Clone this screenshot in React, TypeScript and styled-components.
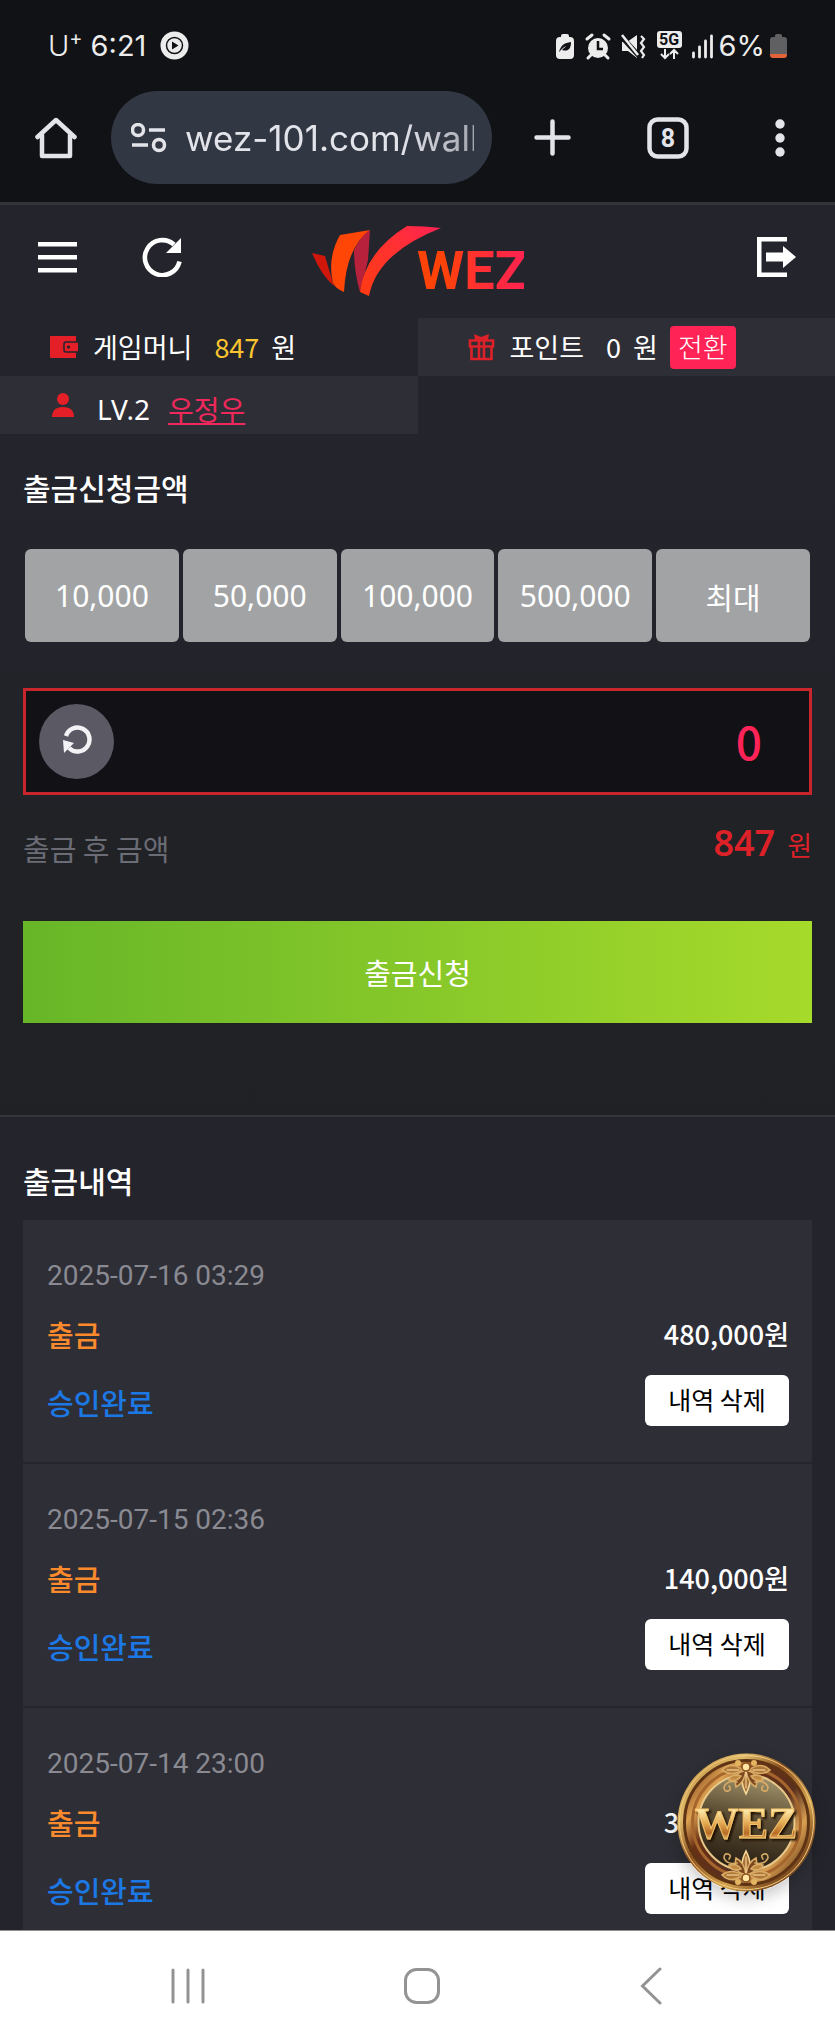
import React, { useState } from "react";
import styled, { createGlobalStyle } from "styled-components";

const kr = `"Noto Sans CJK KR", "Noto Sans", sans-serif`;
const latin = `"Noto Sans", "Noto Sans CJK KR", sans-serif`;

const GlobalStyle = createGlobalStyle`
  * { box-sizing: border-box; }
  body { margin: 0; background: #24242c; color: #fff; font-family: ${kr}; }
  button, input { font: inherit; color: inherit; margin: 0; padding: 0; border: 0; background: none; }
  button { cursor: pointer; }
  svg { display: block; flex: none; }
  h2, p, ul { margin: 0; padding: 0; }
`;

const Screen = styled.div`
  position: relative;
  display: flex;
  flex-direction: column;
  height: 100vh;
  overflow: hidden;
`;

/* Phone and browser bars */

const StatusBar = styled.div`
  display: flex;
  align-items: center;
  justify-content: space-between;
  height: 91px;
  flex: none;
  padding: 0 48px;
  background: #111216;
  color: #ececec;
  font-family: Inter, sans-serif;
  font-size: 29px;
`;

const StatusGroup = styled.div<{ $gap: number }>`
  display: flex;
  align-items: center;
  gap: ${(p) => p.$gap}px;
`;

const Carrier = styled.span`
  font-weight: 300;
  sup { font-size: 20px; line-height: 0; font-weight: 400; }
`;

const Clock = styled.span`
  margin-right: 6px;
`;

const BrowserBar = styled.div`
  display: flex;
  align-items: center;
  flex: none;
  height: 114px;
  padding-bottom: 18px;
  background: #111216;
  border-bottom: 3px solid #33343a;
`;

const BarButton = styled.button<{ $width: number }>`
  display: flex;
  align-items: center;
  justify-content: center;
  width: ${(p) => p.$width}px;
  height: 93px;
  flex: none;
`;

const AddressPill = styled.label`
  display: flex;
  align-items: center;
  gap: 18px;
  flex: 1;
  min-width: 0;
  height: 93px;
  padding: 0 18px 0 20px;
  border-radius: 47px;
  background: #323744;
`;

const AddressInput = styled.input`
  flex: 1;
  min-width: 0;
  color: #e3e3ea;
  font-family: Inter, sans-serif;
  font-size: 35px;
  outline: none;
  mask-image: linear-gradient(90deg, #000 75%, rgba(0, 0, 0, 0.65));
`;

const SystemNav = styled.nav`
  display: grid;
  grid-template-columns: 45fr 11fr 44fr;
  align-items: center;
  flex: none;
  height: 111px;
  background: #fff;
  border-top: 1px solid #8f8f92;
`;

const NavButton = styled.button`
  display: flex;
  justify-content: center;
`;

/* Site header */

const SiteHeader = styled.header`
  display: grid;
  grid-template-columns: 1fr auto 1fr;
  align-items: center;
  height: 113px;
  padding: 0 38px;
  flex: none;
  background: #24242c;
`;

const HeaderTools = styled.div`
  display: flex;
  gap: 64px;
`;

const ToolButton = styled.button`
  justify-self: end;
  margin-bottom: 10px;
`;

const InfoGrid = styled.div`
  display: grid;
  grid-template-columns: 1fr 1fr;
  flex: none;
  background: #24242c;
  font-size: 27px;
  line-height: 40px;
`;

const InfoCell = styled.div<{ $raised?: boolean }>`
  display: flex;
  align-items: center;
  height: 58px;
  padding-left: 50px;
  background: ${(p) => (p.$raised ? "#2e2e36" : "transparent")};
`;

const InfoLabel = styled.span`
  margin: 0 22px 0 15px;
`;

const Balance = styled.span<{ $gold?: boolean }>`
  margin-right: 12px;
  color: ${(p) => (p.$gold ? "#fbc52f" : "#fff")};
`;

const Level = styled.span`
  margin: 8px 18px 0 23px;
  font-family: ${latin};
  font-size: 28px;
`;

const UserLink = styled.a`
  margin-top: 8px;
  color: #f0285c;
  font-size: 28px;
  text-decoration: underline;
  text-decoration-thickness: 2px;
  text-underline-offset: 2px;
`;

const ConvertButton = styled.button`
  height: 43px;
  margin-left: 12px;
  padding: 0 8px;
  border-radius: 4px;
  background: #ff2356;
  font-weight: 300;
  line-height: 40px;
`;

/* Withdrawal form */

const Content = styled.main`
  flex: 1;
  min-height: 0;
  overflow: hidden;
`;

const FormSection = styled.form`
  padding: 31px 23px 92px;
  border-bottom: 2px solid #35363b;
  background: linear-gradient(#24242c, #23242b 30%, #202226 60%, #1f2124);
`;

const SectionTitle = styled.h2`
  font-size: 30px;
  line-height: 44px;
  font-weight: 500;
`;

const AmountGrid = styled.div`
  display: grid;
  grid-template-columns: repeat(5, 1fr);
  gap: 4px;
  margin: 40px 2px 46px;
`;

const AmountButton = styled.button`
  height: 93px;
  border-radius: 6px;
  background: #a2a3a4;
  font-family: ${latin};
  font-size: 30px;
`;

const AmountField = styled.div`
  display: flex;
  align-items: center;
  height: 107px;
  padding: 0 47px 0 13px;
  border: 3px solid #c9252c;
  background: #121116;
`;

const ResetButton = styled.button`
  display: flex;
  align-items: center;
  justify-content: center;
  width: 75px;
  height: 75px;
  padding-bottom: 4px;
  border-radius: 50%;
  background: #5a5964;
`;

const AmountInput = styled.input`
  flex: 1;
  min-width: 0;
  height: 80px;
  padding-bottom: 4px;
  color: #ff2357;
  font-size: 46px;
  font-weight: 500;
  text-align: right;
  outline: none;
`;

const RemainRow = styled.div`
  display: flex;
  align-items: center;
  justify-content: space-between;
  height: 106px;
  color: #6b6c75;
  font-size: 29px;
`;

const Remain = styled.span`
  padding-bottom: 12px;
  color: #dc2128;
  font-size: 27px;
  strong { margin-right: 12px; font-family: ${latin}; font-size: 36px; font-weight: 600; }
`;

const SubmitButton = styled.button`
  display: block;
  width: 100%;
  height: 102px;
  margin-top: 20px;
  background: linear-gradient(90deg, #67b628, #a6da2b);
  font-size: 29px;
`;

/* History */

const HistorySection = styled.section`
  padding: 41px 23px 0;
  background: #24242c;
`;

const HistoryList = styled.ul`
  margin-top: 18px;
  list-style: none;
`;

const HistoryItem = styled.li`
  display: grid;
  grid-template-columns: 1fr auto;
  align-content: start;
  justify-items: start;
  height: 244px;
  padding: 36px 23px 0 24px;
  border-bottom: 2px solid #25252c;
  background: #2e2e36;
  line-height: 40px;
`;

const ItemDate = styled.time`
  grid-column: 1 / -1;
  color: #8a8a92;
  font-family: Roboto, sans-serif;
  font-size: 28px;
`;

const ItemKind = styled.span`
  margin-top: 18px;
  color: #fb8a2c;
  font-size: 29px;
  font-weight: 500;
`;

const ItemAmount = styled.span`
  justify-self: end;
  margin-top: 18px;
  font-size: 27px;
  font-weight: 500;
`;

const ItemState = styled.span`
  margin-top: 28px;
  color: #1c78e4;
  font-size: 29px;
  font-weight: 500;
`;

const DeleteButton = styled.button`
  justify-self: end;
  width: 144px;
  height: 51px;
  margin-top: 21px;
  padding-bottom: 4px;
  border-radius: 6px;
  background: #fff;
  color: #000;
  font-size: 25px;
`;

const MedalButton = styled.button`
  position: absolute;
  right: 19px;
  bottom: 149px;
  border-radius: 50%;
  box-shadow: 0 6px 16px rgba(0, 0, 0, 0.22);
`;

const StatusIcons = () => (
  <svg width="158" height="30" viewBox="0 0 158 30" fill="#ececec">
    <path d="M5 2a2 2 0 0 1 2-2h4a2 2 0 0 1 2 2v1h1a4 4 0 0 1 4 4v14a4 4 0 0 1-4 4H4a4 4 0 0 1-4-4V7a4 4 0 0 1 4-4h1z" transform="translate(0 3)" />
    <path d="M3 21c2-7 5-9 12-10 0 7-3 10-9 8 2-2 4-4 6-4-4 0-6 3-9 6z" fill="#111216" />
    <circle cx="42" cy="17" r="10" />
    <path d="M42 10v8h5" fill="none" stroke="#111216" strokeWidth="2.5" />
    <path d="M31 8l5-4M53 8l-5-4M35 24l-3 3M49 24l3 3" stroke="#ececec" strokeWidth="3" strokeLinecap="round" />
    <path d="M66 11h5l10-7v23l-9-7h-6z" />
    <path d="M64 4l20 22" stroke="#111216" strokeWidth="5" />
    <path d="M66 4l16 20" stroke="#ececec" strokeWidth="2.6" />
    <path d="M85 5l3 3-3 4 3 4-3 4 3 4-2 3" fill="none" stroke="#ececec" strokeWidth="2.2" />
    <rect x="101" y="0" width="25" height="17" rx="3" />
    <text x="113" y="14" textAnchor="middle" fontFamily="Roboto, sans-serif" fontSize="16" fontWeight="700" fill="#111216">5G</text>
    <path d="M109 18v9m-4-4l4 4 4-4M118 28v-9m-4 4l4-4 4 4" fill="none" stroke="#ececec" strokeWidth="2" />
    <path d="M137.500 22v4M143.500 16v10M149.500 10v16M155.500 5v21" stroke="#ececec" strokeWidth="2.800" strokeLinecap="round" />
  </svg>
);

const Battery = () => (
  <svg width="17" height="26" viewBox="0 0 17 26">
    <path d="M5 2.500Q5 1 7 1h3q2 0 2 1.500V4h2q3 0 3 3v14H0V7q0-3 3-3h2z" fill="#606062" />
    <path d="M0 21h17v1q0 3-3 3H3q-3 0-3-3z" fill="#e2633a" />
  </svg>
);

const Play = () => (
  <svg width="29" height="29" viewBox="0 0 29 29">
    <circle cx="14.500" cy="14.500" r="14" fill="#ececec" />
    <circle cx="14.500" cy="14.500" r="8" fill="none" stroke="#111216" strokeWidth="1.500" />
    <path d="M12 10.500v8l6.500-4z" fill="#111216" />
  </svg>
);

const Logo = () => (
  <svg width="212" height="72" viewBox="0 0 212 72" role="img" aria-label="WEZ">
    <defs>
      <linearGradient id="ribbon" gradientUnits="userSpaceOnUse" x1="50" y1="70" x2="125" y2="0">
        <stop offset="0" stopColor="#ff3b12" />
        <stop offset=".6" stopColor="#ff3035" />
        <stop offset="1" stopColor="#ff2351" />
      </linearGradient>
      <linearGradient id="word" gradientUnits="userSpaceOnUse" x1="106" y1="0" x2="212" y2="0">
        <stop offset=".25" stopColor="#ff4208" />
        <stop offset=".55" stopColor="#ff3130" />
        <stop offset="1" stopColor="#ff234f" />
      </linearGradient>
    </defs>
    <path d="M0 27l13 3q4 14 9 30Q9 49 0 27z" fill="#cf170c" />
    <path d="M28 9l30-5Q34 22 32 66q-8-3-11-9-6-25 7-48z" fill="#ff4606" />
    <path d="M58 4l-2 30-8 32q-6-20-6-42Q48 11 58 4z" fill="#b7213b" />
    <path d="M95 0q18 0 34 2Q65 27 57 70l-9-4Q53 26 95 0z" fill="url(#ribbon)" />
    <text x="105" y="63" fontFamily="Roboto, sans-serif" fontWeight="700" fontSize="54" fill="url(#word)">WEZ</text>
  </svg>
);

const Flourish = () => (
  <g fill="none" stroke="#d8ab66" strokeWidth="1.600" strokeLinecap="round">
    <path d="M69 15C63 22 64 31 69 41C74 31 75 22 69 15z" fill="#a66e34" stroke="#f4d89a" />
    <path d="M67 18Q56 20 59 34Q67 30 69 18Q71 30 79 34Q82 20 71 18" fill="#7b4820" />
    <path d="M66 17Q54 8 45 17Q54 24 66 17M72 17Q84 8 93 17Q84 24 72 17" fill="#b07636" />
    <path d="M64 23Q54 20 52 27Q60 29 64 23M74 23Q84 20 86 27Q78 29 74 23" fill="#c08840" />
    <path d="M60 29Q50 27 47 34q0 5 4 4t1-5M78 29Q88 27 91 34q0 5-4 4t-1-5" />
    <path d="M69 19v16M50 17h12M76 17h12" stroke="#ffe7ad" strokeWidth="1" />
    <circle cx="69" cy="14" r="4" fill="#ffe6a2" stroke="#8c531e" />
    <circle cx="61" cy="10" r="3" fill="#e4b461" stroke="none" />
    <circle cx="77" cy="10" r="3" fill="#e4b461" stroke="none" />
  </g>
);

const Medal = () => (
  <svg width="139" height="139" viewBox="0 0 139 139">
    <defs>
      <linearGradient id="rim" x1="0" y1="0" x2="1" y2="1">
        <stop offset="0" stopColor="#b77a2c" />
        <stop offset=".25" stopColor="#e0bd6b" />
        <stop offset=".42" stopColor="#8d501c" />
        <stop offset=".65" stopColor="#d5a550" />
        <stop offset=".8" stopColor="#8a5524" />
        <stop offset="1" stopColor="#5d3413" />
      </linearGradient>
      <linearGradient id="ring" x1="0" y1=".1" x2="1" y2=".9">
        <stop offset="0" stopColor="#6c3315" />
        <stop offset=".2" stopColor="#dfa352" />
        <stop offset=".34" stopColor="#693014" />
        <stop offset=".6" stopColor="#58301f" />
        <stop offset=".78" stopColor="#d9a052" />
        <stop offset="1" stopColor="#5a2c12" />
      </linearGradient>
      <linearGradient id="face" x1=".6" y1="0" x2=".4" y2="1">
        <stop offset="0" stopColor="#a3946c" />
        <stop offset=".45" stopColor="#5b4d33" />
        <stop offset="1" stopColor="#251c11" />
      </linearGradient>
      <linearGradient id="letters" x1="0" y1="0" x2="0" y2="1">
        <stop offset=".2" stopColor="#fff0b5" />
        <stop offset=".5" stopColor="#e3a850" />
        <stop offset=".7" stopColor="#b66a25" />
        <stop offset=".85" stopColor="#f4cf80" />
      </linearGradient>
      <filter id="relief" x="-.1" y="-.1" width="1.3" height="1.3">
        <feDropShadow dx="2" dy="2" stdDeviation="1" floodColor="#1f0f05" floodOpacity="1" />
      </filter>
    </defs>
    <circle cx="69.500" cy="69.500" r="69" fill="url(#rim)" />
    <circle cx="69.500" cy="69.500" r="67" fill="none" stroke="#f0cd82" strokeWidth="1" />
    <circle cx="69.500" cy="69.500" r="62" fill="url(#ring)" stroke="#5f3415" strokeWidth="3" />
    <circle cx="69.500" cy="69.500" r="54" fill="none" stroke="#a5652c" strokeWidth="3" />
    <circle cx="69.500" cy="69.500" r="48" fill="url(#face)" stroke="#e8c88a" strokeWidth="2" />
    <Flourish />
    <g transform="translate(0 139) scale(1 -1)"><Flourish /></g>
    <text x="69" y="85" textAnchor="middle" fontFamily='"Liberation Serif", serif' fontSize="44" fontWeight="700" fill="url(#letters)" stroke="#f3c26a" strokeWidth="1" filter="url(#relief)">WEZ</text>
  </svg>
);

const history = [
  { date: "2025-07-16 03:29", amount: "480,000원" },
  { date: "2025-07-15 02:36", amount: "140,000원" },
  { date: "2025-07-14 23:00", amount: "300,000원" },
];

export default function App() {
  const [amount, setAmount] = useState("0");
  return (
    <Screen>
      <GlobalStyle />
      <StatusBar>
        <StatusGroup $gap={8}>
          <Carrier>U<sup>+</sup></Carrier>
          <Clock>6:21</Clock>
          <Play />
        </StatusGroup>
        <StatusGroup $gap={5}>
          <StatusIcons />
          <span>6%</span>
          <Battery />
        </StatusGroup>
      </StatusBar>

      <BrowserBar>
        <BarButton $width={111} aria-label="홈">
          <svg width="42" height="42" viewBox="0 0 42 42" fill="none" stroke="#e3e3ea" strokeWidth="4.500" strokeLinecap="round" strokeLinejoin="round">
            <path d="M2.500 20L21 3l18.500 17" />
            <path d="M7 18v21h28V18" />
          </svg>
        </BarButton>
        <AddressPill>
          <svg width="36" height="30" viewBox="0 0 36 30" fill="none" stroke="#e3e3ea" strokeWidth="3.500">
            <circle cx="7" cy="7" r="5.500" />
            <circle cx="28" cy="22" r="5.500" />
            <path d="M18 7h16M1 22h16" />
          </svg>
          <AddressInput readOnly value="wez-101.com/wallet" aria-label="주소" />
        </AddressPill>
        <BarButton $width={120} aria-label="새 탭">
          <svg width="37" height="37" viewBox="0 0 37 37" stroke="#e3e3ea" strokeWidth="4.500" strokeLinecap="round">
            <path d="M18.500 2.500v32M2.500 18.500h32" />
          </svg>
        </BarButton>
        <BarButton $width={112} aria-label="탭 목록">
          <svg width="42" height="42" viewBox="0 0 42 42">
            <rect x="2.500" y="2.500" width="37" height="37" rx="8" fill="none" stroke="#e3e3ea" strokeWidth="4.500" />
            <text x="21" y="30" textAnchor="middle" fontFamily="Roboto, sans-serif" fontWeight="700" fontSize="25" fill="#e3e3ea">8</text>
          </svg>
        </BarButton>
        <BarButton $width={111} aria-label="더보기">
          <svg width="10" height="38" viewBox="0 0 10 38" fill="#e3e3ea">
            <circle cx="5" cy="5" r="4.700" />
            <circle cx="5" cy="19" r="4.700" />
            <circle cx="5" cy="33" r="4.700" />
          </svg>
        </BarButton>
      </BrowserBar>

      <SiteHeader>
        <HeaderTools>
          <ToolButton aria-label="메뉴">
            <svg width="40" height="40" viewBox="0 0 40 40" fill="#fff">
              <path d="M0 5h39v4.600H0zM0 18h39v4.600H0zM0 31h39v4.600H0z" />
            </svg>
          </ToolButton>
          <ToolButton aria-label="새로고침">
            <svg width="40" height="40" viewBox="0 0 40 40">
              <path d="M37.500 24.500A17.500 17.500 0 1 1 32 7.500" fill="none" stroke="#fff" strokeWidth="4.600" />
              <path d="M39 1v15H24z" fill="#fff" />
            </svg>
          </ToolButton>
        </HeaderTools>
        <Logo />
        <ToolButton aria-label="로그아웃">
          <svg width="40" height="40" viewBox="0 0 40 40" fill="#fff">
            <path d="M30 0H0v40h30v-4.500H4.500v-31H30z" />
            <path d="M9 15.500h17V9l13 11-13 11v-6.500H9z" />
          </svg>
        </ToolButton>
      </SiteHeader>

      <InfoGrid>
        <InfoCell>
          <svg width="28" height="24" viewBox="0 0 28 24">
            <path d="M0 2q0-1 1-1h25v22H1q-1 0-1-1z" fill="#e41f27" />
            <path d="M28 7H16q-2 0-2 2v6q0 2 2 2h12" fill="#e41f27" stroke="#24242c" strokeWidth="1.500" />
            <circle cx="18.500" cy="12" r="1.600" fill="#24242c" />
          </svg>
          <InfoLabel>게임머니</InfoLabel>
          <Balance $gold>847</Balance>
          <span>원</span>
        </InfoCell>
        <InfoCell $raised>
          <svg width="27" height="27" viewBox="0 0 27 27" fill="none" stroke="#dc2128" strokeWidth="2.600">
            <path d="M2 6.500h23v6H2zM3.500 12.500v12.500h20V12.500M11 7v17M16 7v17" />
            <path d="M6 0l7 3 8-3-1 6H7z" fill="#dc2128" stroke="none" />
          </svg>
          <InfoLabel>포인트</InfoLabel>
          <Balance>0</Balance>
          <span>원</span>
          <ConvertButton>전환</ConvertButton>
        </InfoCell>
        <InfoCell $raised>
          <svg width="24" height="26" viewBox="0 0 24 26" fill="#e41f27">
            <circle cx="13" cy="7" r="6" />
            <path d="M2 25q0-10 11-10t11 10z" />
          </svg>
          <Level>LV.2</Level>
          <UserLink href="#user">우정우</UserLink>
        </InfoCell>
      </InfoGrid>

      <Content>
        <FormSection onSubmit={(e) => e.preventDefault()}>
          <SectionTitle>출금신청금액</SectionTitle>
          <AmountGrid>
            {["10,000", "50,000", "100,000", "500,000", "최대"].map((v) => (
              <AmountButton key={v} type="button" onClick={() => setAmount(v === "최대" ? "847" : v)}>{v}</AmountButton>
            ))}
          </AmountGrid>
          <AmountField>
            <ResetButton type="button" aria-label="초기화" onClick={() => setAmount("0")}>
              <svg width="30" height="30" viewBox="0 0 30 30">
                <path d="M4 11A12 12 0 1 1 7 23" fill="none" stroke="#f3f3f5" strokeWidth="4.500" />
                <path d="M1 15l11 3-10 10z" fill="#f3f3f5" />
              </svg>
            </ResetButton>
            <AmountInput aria-label="출금신청금액" value={amount} onChange={(e) => setAmount(e.target.value)} />
          </AmountField>
          <RemainRow>
            <span>출금 후 금액</span>
            <Remain><strong>847</strong>원</Remain>
          </RemainRow>
          <SubmitButton>출금신청</SubmitButton>
        </FormSection>

        <HistorySection>
          <SectionTitle>출금내역</SectionTitle>
          <HistoryList>
            {history.map((h) => (
              <HistoryItem key={h.date}>
                <ItemDate>{h.date}</ItemDate>
                <ItemKind>출금</ItemKind>
                <ItemAmount>{h.amount}</ItemAmount>
                <ItemState>승인완료</ItemState>
                <DeleteButton>내역 삭제</DeleteButton>
              </HistoryItem>
            ))}
          </HistoryList>
        </HistorySection>
      </Content>

      <MedalButton aria-label="WEZ">
        <Medal />
      </MedalButton>

      <SystemNav>
        <NavButton aria-label="최근 앱">
          <svg width="34" height="36" viewBox="0 0 34 36" stroke="#939393" strokeWidth="3" strokeLinecap="round">
            <path d="M2 2v32M17 2v32M32 2v32" />
          </svg>
        </NavButton>
        <NavButton aria-label="홈 화면">
          <svg width="36" height="36" viewBox="0 0 36 36">
            <rect x="1.500" y="1.500" width="33" height="33" rx="11" fill="none" stroke="#939393" strokeWidth="3" />
          </svg>
        </NavButton>
        <NavButton aria-label="뒤로">
          <svg width="22" height="38" viewBox="0 0 22 38" fill="none" stroke="#939393" strokeWidth="3" strokeLinecap="round">
            <path d="M20 2L2.500 19 20 36" />
          </svg>
        </NavButton>
      </SystemNav>
    </Screen>
  );
}
